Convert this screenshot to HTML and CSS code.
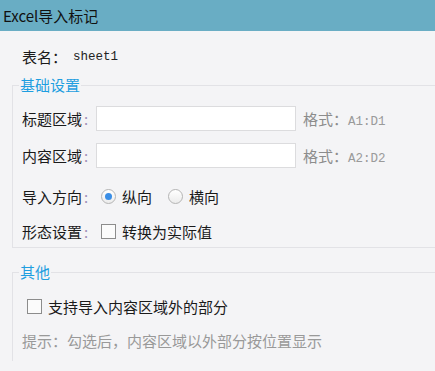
FILE: index.html
```html
<!DOCTYPE html>
<html lang="zh-CN">
<head>
  <meta charset="UTF-8">
  <title>Excel导入标记</title>
  <link rel="stylesheet" href="styles.css">
</head>
<body>

<div class="titlebar">Excel导入标记</div>

<div class="content">
  <div class="sheet-row">
    <span class="key">表名：</span><span class="mono sheet-name">sheet1</span>
  </div>

  <fieldset class="group">
    <legend>基础设置</legend>
    <div class="row first">
      <label class="field-label" for="titleArea">标题区域<span class="colon">:</span></label>
      <input type="text" id="titleArea" class="area-input">
      <span class="fmt">格式：<span class="mono">A1:D1</span></span>
    </div>
    <div class="row">
      <label class="field-label" for="contentArea">内容区域<span class="colon">:</span></label>
      <input type="text" id="contentArea" class="area-input">
      <span class="fmt">格式：<span class="mono">A2:D2</span></span>
    </div>
    <div class="row direction">
      <span class="field-label">导入方向<span class="colon">:</span></span>
      <span class="radio checked"></span><span class="opt">纵向</span>
      <span class="radio second"></span><span class="opt">横向</span>
    </div>
    <div class="row state">
      <span class="field-label">形态设置<span class="colon">:</span></span>
      <span class="checkbox"></span><span class="opt">转换为实际值</span>
    </div>
  </fieldset>

  <fieldset class="group other">
    <legend>其他</legend>
    <div class="check-row">
      <span class="checkbox"></span><span class="opt">支持导入内容区域外的部分</span>
    </div>
    <div class="tip">提示：勾选后，内容区域以外部分按位置显示</div>
  </fieldset>
</div>

</body>
</html>
```

FILE: styles.css
```css
html, body {
  margin: 0;
  height: 100%;
  overflow: hidden;
}

body {
  font-family: "Noto Sans CJK SC", "Noto Sans", sans-serif;
  font-size: 15px;
  color: #1a1a1a;
  background: #f4f4f6;
}

.titlebar {
  height: 31px;
  line-height: 31px;
  padding-left: 3px;
  background: #69adc4;
  color: #111;
}

.content {
  padding-left: 12px;
}

.sheet-row {
  margin-top: 16px;
  padding-left: 10px;
  height: 20px;
  line-height: 20px;
  display: flex;
  align-items: center;
}

.key {
  width: 51px;
}

.mono {
  font-family: "Liberation Mono", monospace;
  font-size: 12.5px;
}

.sheet-name {
  color: #222;
}

.group {
  margin: 10px -20px 0 0;
  padding: 0 0 3px 6px;
  border: 1px solid #e2e2e6;
  border-right: none;
}

.group legend {
  padding: 0 1px;
  font-size: 15px;
  line-height: 16px;
  color: #1e9ee0;
}

.row {
  height: 25px;
  display: flex;
  align-items: center;
  padding-left: 3px;
  margin-top: 12px;
}

.row.first {
  margin-top: 13px;
}

.row.direction {
  margin-top: 16px;
}

.row.state {
  margin-top: 10px;
}

.field-label {
  width: 74px;
  white-space: nowrap;
}

.colon {
  color: #a090b8;
  margin-left: 2px;
}

.area-input {
  width: 200px;
  height: 25px;
  box-sizing: border-box;
  margin: 0;
  border: 1px solid #dcdcde;
  background: #fff;
  padding: 0 4px;
}

.fmt {
  margin-left: 7px;
  color: #8c8c8c;
}

.fmt .mono {
  color: #9a9a9a;
}

.radio {
  width: 15px;
  height: 15px;
  box-sizing: border-box;
  border: 1px solid #b4b4b4;
  border-radius: 50%;
  background: linear-gradient(#ffffff, #ececec);
  margin-left: 5px;
  display: flex;
  align-items: center;
  justify-content: center;
}

.radio.checked::after {
  content: "";
  width: 7px;
  height: 7px;
  border-radius: 50%;
  background: #3a8ee6;
}

.radio.second {
  margin-left: 16px;
}

.opt {
  margin-left: 6px;
}

.checkbox {
  width: 15px;
  height: 15px;
  box-sizing: border-box;
  border: 1px solid #8c8c8c;
  background: #fbfbfb;
  margin-left: 5px;
}

.other {
  margin-top: 16px;
  padding-bottom: 10px;
  border-bottom: none;
}

.check-row {
  margin-top: 16px;
  padding-left: 3px;
  height: 20px;
  display: flex;
  align-items: center;
}

.tip {
  margin-top: 15px;
  padding-left: 3px;
  height: 20px;
  line-height: 20px;
  color: #999;
}
```
